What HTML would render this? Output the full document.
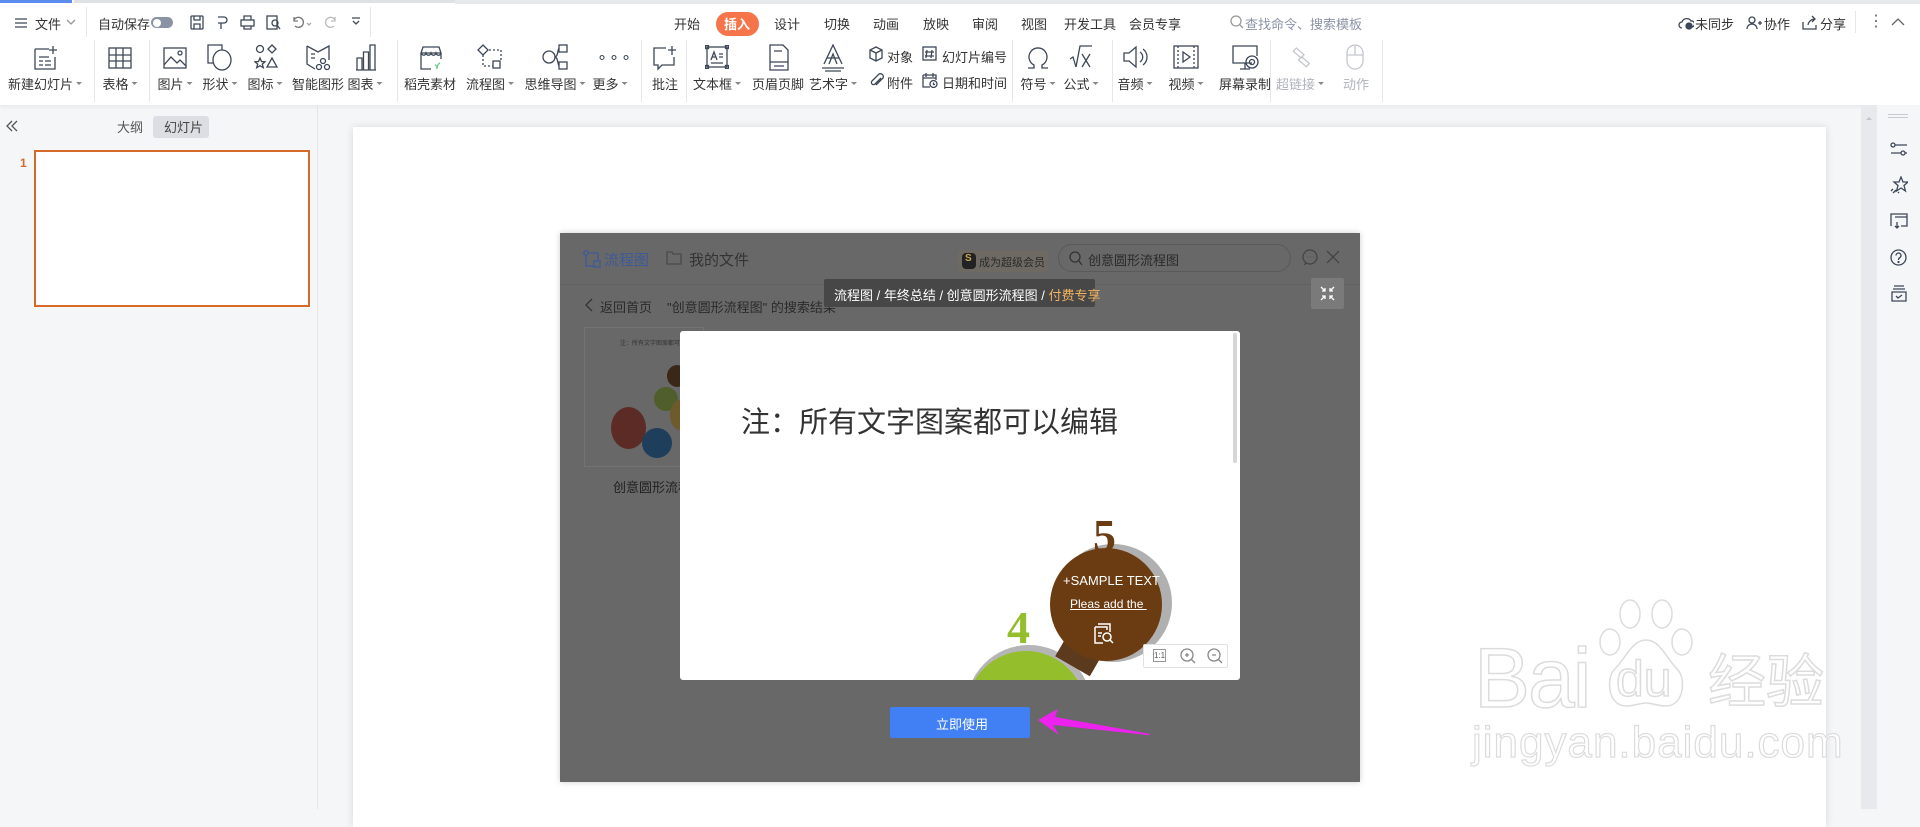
<!DOCTYPE html>
<html><head><meta charset="utf-8">
<style>
*{box-sizing:border-box;margin:0;padding:0}
body{width:1920px;height:809px;overflow:hidden;position:relative;background:#f5f6f8;font-family:"Liberation Sans","Noto Sans CJK SC",sans-serif;color:#333;font-size:13px}
.a{position:absolute}
.t{position:absolute;white-space:nowrap}
.ic{position:absolute;stroke:#3d4757;fill:none;stroke-width:1.3}
.lbl{position:absolute;top:93px;font-size:13px;white-space:nowrap;transform:translateX(-50%);color:#333}
.sep{position:absolute;top:59px;width:1px;height:62px;background:#e6e7ea}
.menu{position:absolute;top:14px;font-size:13px;transform:translateX(-50%);white-space:nowrap}
.caret:after{content:"";display:inline-block;border:3px solid transparent;border-top:3px solid #888;margin-left:3px;vertical-align:1px}
</style></head><body>
<div class="a" style="left:0;top:0;width:1920px;height:105px;background:#fff;box-shadow:0 2px 4px rgba(0,0,0,.06)"></div>
<div class="a" style="left:0;top:0;width:72px;height:3px;background:#5b8def"></div>
<div class="a" style="left:74px;top:0;width:381px;height:3px;background:#dfe1e5"></div>
<div class="a" style="left:455px;top:0;width:1465px;height:4px;background:#e8e9ec"></div>

<div class="a" style="left:0;top:-7px;width:1920px;height:60px">
<svg class="ic" style="left:14px;top:23px" width="14" height="14"><path d="M1 3h12M1 7h12M1 11h12"/></svg>
<div class="t" style="left:35px;top:21px">文件</div>
<svg class="ic" style="left:66px;top:25px;stroke:#999" width="10" height="8"><path d="M1 2l4 4 4-4"/></svg>
<div class="a" style="left:86px;top:14px;width:1px;height:30px;background:#e6e7ea"></div>
<div class="t" style="left:98px;top:21px">自动保存</div>
<div class="a" style="left:151px;top:24px;width:22px;height:11px;border-radius:6px;background:#8a93a6"></div>
<div class="a" style="left:153px;top:25.5px;width:8px;height:8px;border-radius:50%;background:#fff"></div>
<svg class="ic" style="left:190px;top:22px" width="14" height="15"><rect x="1" y="1" width="12" height="13" rx="1"/><path d="M4 1v4h6V1M4 14V9h6v5"/></svg>
<svg class="ic" style="left:215px;top:22px" width="14" height="15"><path d="M3 2h6a3 3 0 010 6H6v6M3 8h3"/></svg>
<svg class="ic" style="left:240px;top:22px" width="15" height="15"><rect x="1" y="5" width="13" height="6"/><path d="M4 5V1h7v4M4 11v3h7v-3"/></svg>
<svg class="ic" style="left:266px;top:22px" width="15" height="15"><rect x="1" y="1" width="10" height="13"/><circle cx="9" cy="8" r="3"/><path d="M11 10l3 4"/></svg>
<svg class="ic" style="left:291px;top:22px;stroke:#777" width="22" height="15"><path d="M3 5a5 5 0 11 1 6M3 2v4h4"/><path d="M16 8l2 2 2-2" stroke="#aaa"/></svg>
<svg class="ic" style="left:322px;top:22px;stroke:#bbb" width="16" height="15"><path d="M13 5a5 5 0 10-1 6M13 2v4H9"/></svg>
<svg class="ic" style="left:351px;top:23px" width="10" height="12"><path d="M1 2h8M2 5l3 3 3-3"/></svg>
<div class="a" style="left:370px;top:14px;width:1px;height:30px;background:#e6e7ea"></div>

<div class="menu" style="left:687px;top:21px">开始</div>
<div class="a" style="left:716px;top:19px;width:43px;height:24px;border-radius:12px;background:#f5744a"></div>
<div class="menu" style="left:737px;color:#fff;top:21px;font-weight:bold">插入</div>
<div class="menu" style="left:787px;top:21px">设计</div>
<div class="menu" style="left:837px;top:21px">切换</div>
<div class="menu" style="left:886px;top:21px">动画</div>
<div class="menu" style="left:936px;top:21px">放映</div>
<div class="menu" style="left:985px;top:21px">审阅</div>
<div class="menu" style="left:1034px;top:21px">视图</div>
<div class="menu" style="left:1090px;top:21px">开发工具</div>
<div class="menu" style="left:1155px;top:21px">会员专享</div>
<svg class="ic" style="left:1230px;top:22px;stroke:#999" width="14" height="14"><circle cx="6" cy="6" r="5"/><path d="M10 10l3 3"/></svg>
<div class="t" style="left:1245px;top:21px;color:#8a93a6">查找命令、搜索模板</div>

<svg class="ic" style="left:1678px;top:23px" width="16" height="14"><path d="M4 12a3 3 0 010-6 5 5 0 019-1 3 3 0 011 6"/><circle cx="11" cy="10" r="3" fill="#3d4757"/></svg>
<div class="t" style="left:1695px;top:21px">未同步</div>
<svg class="ic" style="left:1746px;top:22px" width="16" height="15"><circle cx="6" cy="5" r="3"/><path d="M1 14a5 5 0 0110 0M12 8h4M14 6v4"/></svg>
<div class="t" style="left:1764px;top:21px">协作</div>
<svg class="ic" style="left:1802px;top:22px" width="16" height="15"><path d="M1 7v7h13V10M6 10a7 7 0 017-6M10 1l3 3-3 3"/></svg>
<div class="t" style="left:1820px;top:21px">分享</div>
<div class="a" style="left:1855px;top:18px;width:1px;height:22px;background:#e6e7ea"></div>
<div class="t" style="left:1868px;top:18px;font-size:16px;color:#666">⋮</div>
<svg class="ic" style="left:1891px;top:24px;stroke:#666" width="14" height="9"><path d="M1 8l6-6 6 6"/></svg>
</div>

<div class="a" style="left:0;top:-19px;width:1920px;height:130px">
<svg class="ic" style="left:33px;top:64px" width="26" height="26"><path d="M2 4h14M2 4v20h20V12M6 12h10M6 16h4M6 20h4M12 16h6M12 20h6M20 1v8M16 5h8"/></svg>
<div class="lbl caret" style="left:45px">新建幻灯片</div>
<svg class="ic" style="left:108px;top:66px" width="24" height="22"><rect x="1" y="1" width="22" height="20"/><path d="M1 8h22M1 14h22M8 1v20M15 1v20"/></svg>
<div class="lbl caret" style="left:120px">表格</div>
<svg class="ic" style="left:163px;top:66px" width="24" height="22"><rect x="1" y="1" width="22" height="20"/><path d="M1 18l7-8 6 6 3-3 6 6"/><circle cx="17" cy="6" r="2"/></svg>
<div class="lbl caret" style="left:175px">图片</div>
<svg class="ic" style="left:207px;top:63px" width="26" height="28"><path d="M15 6V1H1v18h6"/><ellipse cx="15" cy="16" rx="9" ry="10"/></svg>
<div class="lbl caret" style="left:220px">形状</div>
<svg class="ic" style="left:254px;top:63px" width="24" height="26"><circle cx="6" cy="5" r="3.5"/><path d="M18 1l4 4-4 4-4-4z"/><path d="M6 14l1.5 3.5 3.5.3-2.7 2.3 1 3.6-3.3-2-3.3 2 1-3.6L.9 17.8l3.6-.3z"/><path d="M18 14l5 9h-10z"/></svg>
<div class="lbl caret" style="left:265px">图标</div>
<svg class="ic" style="left:305px;top:63px" width="26" height="28"><path d="M2 2l11 6 11-6v14M2 2v18l8 5M6 10h4M6 14h4"/><circle cx="18" cy="17" r="2.5"/><circle cx="14" cy="23" r="2.5"/><circle cx="22" cy="23" r="2.5"/></svg>
<div class="lbl" style="left:318px">智能图形</div>
<svg class="ic" style="left:355px;top:63px" width="22" height="27"><path d="M1 26h20M2 26V14h5v12M8.5 26V8h5v18M15 26V1h5v25"/></svg>
<div class="lbl caret" style="left:365px">图表</div>
<div class="sep" style="left:94px"></div><div class="sep" style="left:149px"></div><div class="sep" style="left:397px"></div>

<svg class="ic" style="left:418px;top:64px" width="26" height="26"><path d="M3 8h20l-2-6H5zM3 8v16h10M23 8v6M3 8c2 3 4 3 5 0 1 3 4 3 5 0 1 3 4 3 5 0 1 3 4 3 5 0"/><path d="M19 24c0-5 3-6 3-6M17 20c2 0 2 4 2 4" stroke="#6c8"/></svg>
<div class="lbl" style="left:430px">稻壳素材</div>
<svg class="ic" style="left:477px;top:63px" width="26" height="26"><path d="M6 1l5 5-5 5-5-5z"/><path d="M6 11v11h10M12 6h12v12" stroke-dasharray="2 2"/><rect x="16" y="17" width="7" height="7"/></svg>
<div class="lbl caret" style="left:490px">流程图</div>
<svg class="ic" style="left:541px;top:63px" width="28" height="26"><circle cx="8" cy="13" r="6"/><rect x="18" y="1" width="8" height="7"/><rect x="18" y="18" width="8" height="7"/><path d="M14 13c3 0 3-9 4-9M14 13c3 0 3 9 4 9"/></svg>
<div class="lbl caret" style="left:555px">思维导图</div>
<div class="t" style="left:597px;top:66px;font-size:16px;letter-spacing:2px;color:#3d4757">∘∘∘</div>
<div class="lbl caret" style="left:610px">更多</div>
<svg class="ic" style="left:652px;top:64px" width="26" height="26"><path d="M14 3H2v17h4v4l4-4h12V12M20 1v9M16 5h8"/></svg>
<div class="lbl" style="left:665px">批注</div>
<div class="sep" style="left:641px"></div><div class="sep" style="left:686px"></div>

<svg class="ic" style="left:705px;top:64px" width="24" height="24"><rect x="2" y="2" width="20" height="20"/><rect x="0.5" y="0.5" width="3" height="3"/><rect x="20.5" y="0.5" width="3" height="3"/><rect x="0.5" y="20.5" width="3" height="3"/><rect x="20.5" y="20.5" width="3" height="3"/><path d="M6 15l3-8 3 8M7 12h4M14 9h4M14 12h4M6 18h12"/></svg>
<div class="lbl caret" style="left:717px">文本框</div>
<svg class="ic" style="left:769px;top:63px" width="20" height="27"><path d="M1 1h13l5 5v20H1zM5 7h8M1 18h18M5 22h10"/></svg>
<div class="lbl" style="left:778px">页眉页脚</div>
<svg class="ic" style="left:821px;top:63px" width="24" height="28"><path d="M3 20l9-19 9 19M6 14h12M8 20l4-10 4 10M1 24h22M4 27h16"/></svg>
<div class="lbl caret" style="left:833px">艺术字</div>
<svg class="ic" style="left:869px;top:65px" width="14" height="16"><path d="M7 1l6 3v8l-6 3-6-3V4zM1 4l6 3 6-3M7 7v8"/></svg>
<div class="t" style="left:887px;top:66px">对象</div>
<svg class="ic" style="left:869px;top:91px" width="15" height="16"><path d="M12 6l-6 6a2 2 0 01-3-3l7-7a3 3 0 014 4l-7 7"/></svg>
<div class="t" style="left:887px;top:92px">附件</div>
<svg class="ic" style="left:922px;top:65px" width="15" height="15"><rect x="1" y="1" width="13" height="13"/><path d="M5 4l-1 8M10 4l-1 8M3 6h9M3 10h9"/></svg>
<div class="t" style="left:942px;top:66px">幻灯片编号</div>
<svg class="ic" style="left:922px;top:91px" width="16" height="16"><path d="M1 3h13v5M1 3v12h7M1 6h13M4 1v4M11 1v4"/><circle cx="11.5" cy="12" r="3.5"/><path d="M11.5 10.5v2h1.5"/></svg>
<div class="t" style="left:942px;top:92px">日期和时间</div>
<div class="sep" style="left:1012px"></div>

<svg class="ic" style="left:1026px;top:64px" width="24" height="24"><path d="M2 23h6v-3a9 9 0 118 0v3h6"/></svg>
<div class="lbl caret" style="left:1038px">符号</div>
<svg class="ic" style="left:1069px;top:64px" width="24" height="24"><path d="M1 14l3-2 3 10 4-21h12M13 9l8 13M21 9l-8 13"/></svg>
<div class="lbl caret" style="left:1081px">公式</div>
<div class="sep" style="left:1112px"></div>
<svg class="ic" style="left:1123px;top:64px" width="26" height="24"><path d="M1 8h5l7-6v20l-7-6H1zM17 7a6 6 0 010 10M20 4a10 10 0 010 16"/></svg>
<div class="lbl caret" style="left:1135px">音频</div>
<svg class="ic" style="left:1173px;top:64px" width="26" height="24"><rect x="1" y="1" width="24" height="22"/><path d="M5 1v22M21 1v22" stroke-dasharray="2 2"/><path d="M10 7l7 5-7 5z"/></svg>
<div class="lbl caret" style="left:1186px">视频</div>
<svg class="ic" style="left:1232px;top:64px" width="28" height="26"><path d="M20 18H1V1h24v10M8 24h10M13 18v6"/><circle cx="20" cy="17" r="6"/><circle cx="20" cy="17" r="2.5"/></svg>
<div class="lbl" style="left:1245px">屏幕录制</div>
<div class="sep" style="left:1270px"></div>
<svg class="ic" style="left:1290px;top:64px;stroke:#c4c7cc" width="22" height="26"><path d="M6 4l4-2 5 9-4 2zM8 14l4-2 5 9-4 2z" transform="rotate(-20 11 13)"/></svg>
<div class="lbl caret" style="left:1300px;color:#b0b4ba">超链接</div>
<svg class="ic" style="left:1346px;top:61px;stroke:#c4c7cc" width="18" height="28"><rect x="1" y="3" width="16" height="24" rx="8"/><path d="M1 13h16M9 3v10"/></svg>
<div class="lbl" style="left:1356px;color:#b0b4ba">动作</div>
<div class="sep" style="left:1382px"></div>
</div>

<!-- left panel -->
<div class="a" style="left:317px;top:105px;width:1px;height:704px;background:#e3e5e8"></div>
<svg class="ic" style="left:6px;top:120px;stroke:#555" width="12" height="12"><path d="M6 1L1 6l5 5M11 1L6 6l5 5"/></svg>
<div class="t" style="left:117px;top:117px;color:#555">大纲</div>
<div class="a" style="left:153px;top:116px;width:56px;height:22px;border-radius:3px;background:#dcdee3"></div>
<div class="t" style="left:164px;top:117px;color:#444">幻灯片</div>
<div class="t" style="left:20px;top:156px;color:#d56a2a;font-weight:bold;font-size:12px">1</div>
<div class="a" style="left:34px;top:150px;width:276px;height:157px;border:2px solid #d56a2a;background:#fff"></div>

<!-- slide -->
<div class="a" style="left:353px;top:127px;width:1473px;height:700px;background:#fff;box-shadow:0 0 8px rgba(0,0,0,.12)"></div>
<!-- watermark -->
<div class="t" style="left:1474px;top:636px;font-size:84px;line-height:84px;color:#fff;-webkit-text-stroke:1.5px #dcdcdc;font-family:'Liberation Sans',sans-serif;letter-spacing:-2px">Bai</div>
<svg class="a" style="left:1588px;top:598px" width="120" height="120" fill="#fff" stroke="#dcdcdc" stroke-width="1.5"><ellipse cx="42" cy="16" rx="10" ry="14"/><ellipse cx="74" cy="16" rx="10" ry="14"/><ellipse cx="22" cy="44" rx="10" ry="13"/><ellipse cx="94" cy="44" rx="10" ry="13"/><path d="M58 42c-14 0-20 18-32 30-8 9-6 36 12 36 8 0 14-3 20-3s12 3 20 3c18 0 20-27 12-36C78 60 72 42 58 42z"/></svg>
<div class="t" style="left:1616px;top:650px;font-size:50px;color:#fff;-webkit-text-stroke:1.5px #dcdcdc">du</div>
<div class="t" style="left:1708px;top:650px;font-size:58px;line-height:66px;color:#fff;-webkit-text-stroke:1.5px #dcdcdc">经验</div>
<div class="t" style="left:1472px;top:718px;font-size:44px;line-height:50px;color:#fff;-webkit-text-stroke:1.2px #dcdcdc;letter-spacing:1px">jingyan.baidu.com</div>

<!-- right sidebar -->
<div class="a" style="left:1861px;top:105px;width:16px;height:704px;background:#e8e9ec"></div>
<div class="a" style="left:1866px;top:114px;border:3px solid transparent;border-bottom:3px solid #c0c3c8"></div>
<div class="a" style="left:1877px;top:105px;width:43px;height:704px;background:#f5f6f8"></div>
<div class="a" style="left:1888px;top:114px;width:20px;height:4px;border-top:1px solid #c8cacf;border-bottom:1px solid #c8cacf"></div>
<svg class="ic" style="left:1890px;top:141px" width="18" height="16"><circle cx="3" cy="4" r="2"/><path d="M5 4h12M1 12h10M15 12h2"/><circle cx="13" cy="12" r="2"/></svg>
<svg class="ic" style="left:1890px;top:176px" width="18" height="18"><path d="M11 1l2 5h5l-4 3.5 1.5 5.5-4.5-3-4.5 3L8 9.5 4 6h5zM1 15l2-2M3 17l3-3M8 17l1-1"/></svg>
<svg class="ic" style="left:1890px;top:213px" width="18" height="16"><path d="M1 13V1h16v12h-6M5 4h12M7 9v6M5 13l2 2 2-2"/></svg>
<svg class="ic" style="left:1890px;top:249px" width="17" height="17"><circle cx="8.5" cy="8.5" r="7.5"/><path d="M6 6.5a2.5 2.5 0 114 2c-1.5.8-1.5 1.5-1.5 2.5"/><circle cx="8.5" cy="13" r=".5"/></svg>
<svg class="ic" style="left:1890px;top:285px" width="17" height="17"><path d="M4 1h10M3 4h12M2 7h14v9H2zM6 11l2 2 4-3"/></svg>

<!-- dialog -->
<div class="a" style="left:560px;top:233px;width:800px;height:549px;background:#686868;box-shadow:0 0 6px rgba(0,0,0,.2)"></div>
<svg class="ic" style="left:583px;top:250px;stroke:#3d5a99" width="18" height="18"><circle cx="3" cy="3" r="2.2"/><path d="M3 5v11h8M6 3h9v8" /><rect x="11" y="11" width="6" height="6"/></svg>
<div class="t" style="left:604px;top:249px;font-size:15px;color:#3d5a99">流程图</div>
<svg class="ic" style="left:666px;top:249px;stroke:#4a4a4a" width="16" height="16"><path d="M1 3h5l1 2h8v10H1z"/></svg>
<div class="t" style="left:689px;top:249px;font-size:15px;color:#333">我的文件</div>
<div class="a" style="left:958px;top:250px;width:90px;height:22px;border-radius:4px;background:#6e6a63"></div>
<div class="a" style="left:962px;top:253px;width:14px;height:16px;border-radius:4px;background:#222"></div>
<div class="t" style="left:965px;top:253px;font-size:10px;color:#c9a55a;font-weight:bold">S</div>
<div class="t" style="left:979px;top:254px;font-size:11px;color:#2a2a2a">成为超级会员</div>
<div class="a" style="left:1058px;top:244px;width:233px;height:28px;border-radius:14px;border:1px solid #5a5a5a"></div>
<svg class="ic" style="left:1069px;top:251px;stroke:#333" width="14" height="15"><circle cx="6" cy="6" r="5"/><path d="M10 10l3 4"/></svg>
<div class="t" style="left:1088px;top:250px;font-size:13px;color:#2a2a2a">创意圆形流程图</div>
<svg class="ic" style="left:1302px;top:249px;stroke:#444" width="16" height="16"><circle cx="8" cy="8" r="7"/><path d="M4 14l-2 2M5 8h.5M8 8h.5M11 8h.5"/></svg>
<svg class="ic" style="left:1326px;top:250px;stroke:#444" width="14" height="14"><path d="M1 1l12 12M13 1L1 13"/></svg>
<div class="a" style="left:560px;top:284px;width:800px;height:1px;background:#616161"></div>
<svg class="ic" style="left:585px;top:298px;stroke:#333" width="8" height="14"><path d="M7 1L1 7l6 6"/></svg>
<div class="t" style="left:600px;top:297px;color:#2a2a2a">返回首页</div>
<div class="t" style="left:667px;top:297px;color:#2a2a2a">"创意圆形流程图" 的搜索结果</div>
<div class="a" style="left:584px;top:327px;width:120px;height:140px;border:1px solid #737373;background:#686868"></div>
<div class="t" style="left:620px;top:338px;font-size:6px;color:#333">注：所有文字图案都可以编辑</div>
<div class="a" style="left:611px;top:407px;width:35px;height:42px;border-radius:50%;background:#5c2b26"></div>
<div class="a" style="left:642px;top:428px;width:30px;height:30px;border-radius:50%;background:#1f3e5c"></div>
<div class="a" style="left:654px;top:387px;width:24px;height:24px;border-radius:50%;background:#4f5e2a"></div>
<div class="a" style="left:667px;top:365px;width:20px;height:22px;border-radius:50%;background:#3a2717"></div>
<div class="a" style="left:670px;top:400px;width:20px;height:30px;border-radius:50%;background:#6e5a2a"></div>
<div class="t" style="left:613px;top:477px;font-size:13px;color:#222">创意圆形流程图</div>

<div class="a" style="left:824px;top:279px;width:271px;height:28px;background:#474747;border-radius:2px"></div>
<div class="t" style="left:834px;top:285px;font-size:13px;color:#fff">流程图 / 年终总结 / 创意圆形流程图 / <span style="color:#f2b261">付费专享</span></div>
<div class="a" style="left:1311px;top:278px;width:33px;height:31px;background:#7a7a7a;border-radius:2px"></div>
<svg class="ic" style="left:1320px;top:286px;stroke:#fff" width="15" height="15"><path d="M1 1l4 4M5 2v3H2M14 1l-4 4M10 2v3h3M1 14l4-4M2 10h3v3M14 14l-4-4M13 10h-3v3"/></svg>

<div class="a" style="left:680px;top:331px;width:560px;height:349px;background:#fff;border-radius:3px;overflow:hidden">
  <div class="a" style="left:553px;top:2px;width:4px;height:130px;background:#d6d6d6;border-radius:2px"></div>
  <div class="t" style="left:61px;top:68px;font-size:29px;color:#333">注：所有文字图案都可以编辑</div>
  <div class="a" style="left:286px;top:314px;width:126px;height:126px;border-radius:50%;background:#b5b5b5"></div>
  <div class="a" style="left:286px;top:320px;width:120px;height:120px;border-radius:50%;background:#95be2d"></div>
  <div class="t" style="left:327px;top:270px;font-size:46px;font-family:'Liberation Serif',serif;font-weight:bold;color:#95be2d">4</div>
  <div class="a" style="left:390px;top:270px;width:40px;height:70px;background:#5b3a1d;transform:rotate(30deg)"></div>
  <div class="a" style="left:374px;top:213px;width:118px;height:118px;border-radius:50%;background:#b0b0b0"></div>
  <div class="a" style="left:370px;top:217px;width:112px;height:113px;border-radius:50%;background:#6b3c12"></div>
  <div class="t" style="left:413px;top:178px;font-size:46px;font-family:'Liberation Serif',serif;font-weight:bold;color:#6b3c12">5</div>
  <div class="t" style="left:383px;top:242px;font-size:13px;color:#fff">+SAMPLE TEXT</div>
  <div class="t" style="left:390px;top:266px;font-size:12px;color:#fff;text-decoration:underline">Pleas add the&nbsp;</div>
  <svg class="ic" style="left:412px;top:290px;stroke:#fff;stroke-width:1.5" width="24" height="24"><path d="M6 3h12v8M3 6h12v3M3 6v16h8M6 12h4M6 15h3"/><circle cx="15" cy="16" r="4"/><path d="M18 19l3 3"/></svg>
  <div class="a" style="left:463px;top:313px;width:85px;height:24px;background:#fff;border:1px solid #e2e2e2;border-radius:2px"></div>
  <div class="a" style="left:473px;top:318px;width:13px;height:13px;border:1px solid #999;font-size:8px;line-height:11px;text-align:center;color:#555">1:1</div>
  <svg class="ic" style="left:500px;top:317px;stroke:#888" width="16" height="16"><circle cx="7" cy="7" r="6"/><path d="M11 11l4 4M5 7h4M7 5v4"/></svg>
  <svg class="ic" style="left:527px;top:317px;stroke:#888" width="16" height="16"><circle cx="7" cy="7" r="6"/><path d="M11 11l4 4M5 7h4"/></svg>
</div>

<div class="a" style="left:890px;top:707px;width:140px;height:31px;background:#4080f4;border-radius:2px"></div>
<div class="t" style="left:936px;top:714px;color:#fff;font-size:13px">立即使用</div>
<svg class="a" style="left:1030px;top:700px" width="120" height="45"><path d="M8 20l20-11-3 8 112 20-114-12 6 10z" fill="#ee22ee"/></svg>
</body></html>
